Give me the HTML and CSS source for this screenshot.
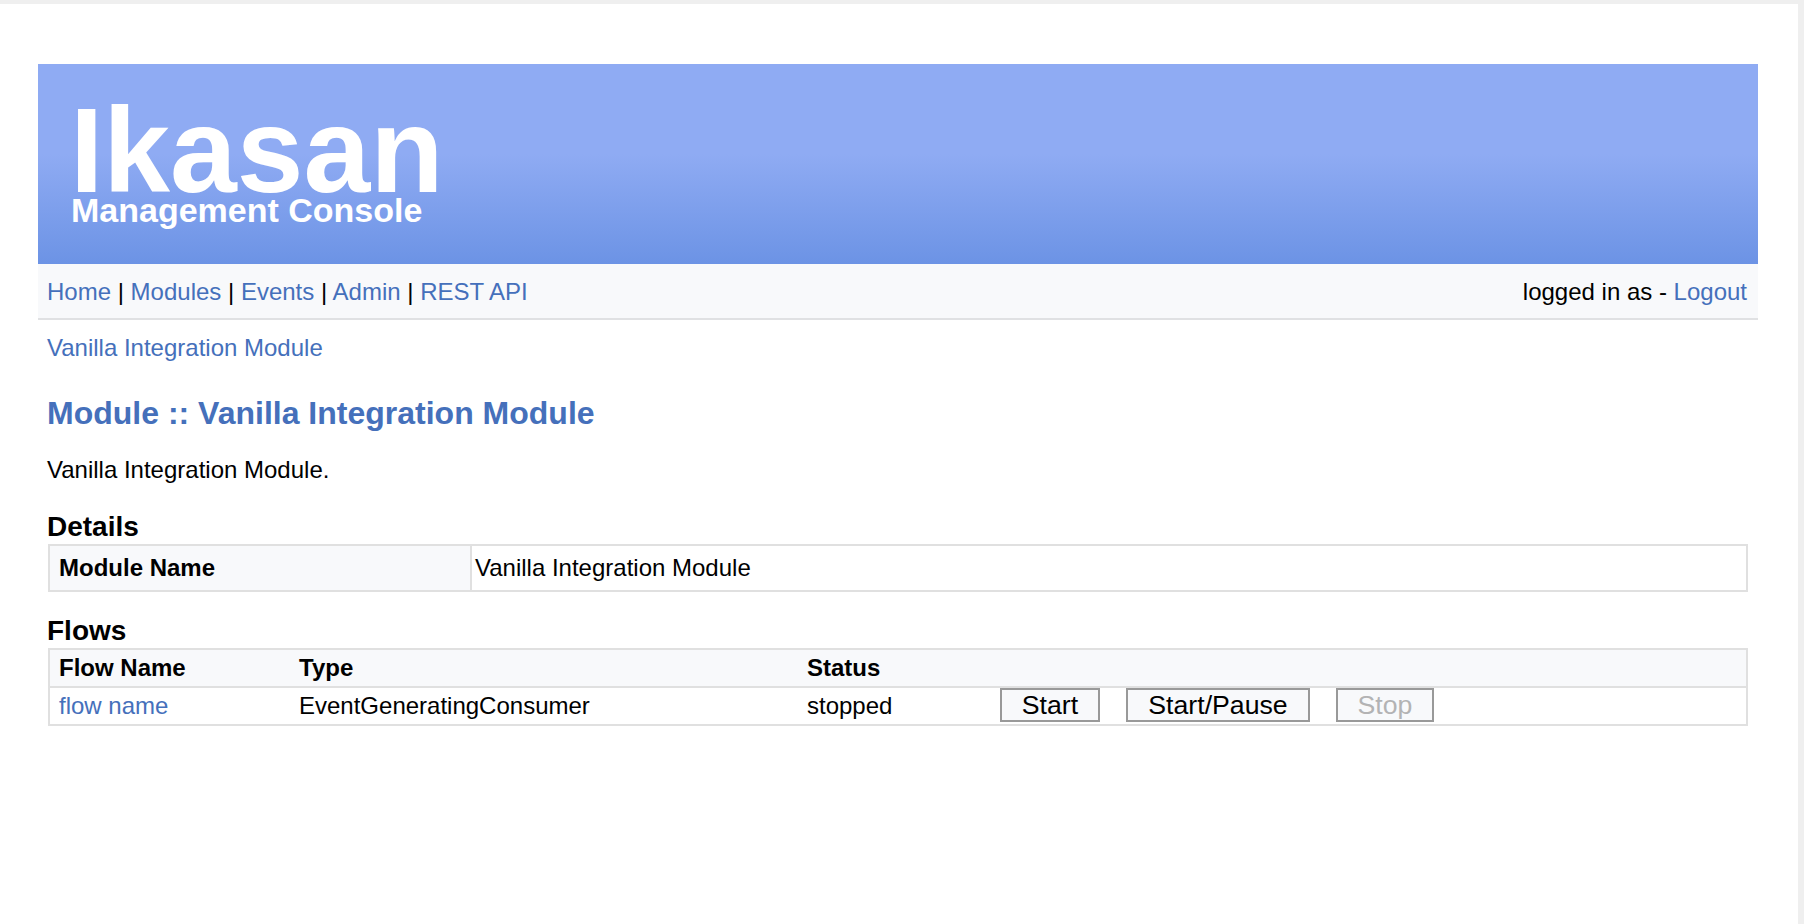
FILE: index.html
```html
<!DOCTYPE html>
<html lang="en">
<head>
<meta charset="utf-8">
<title>Ikasan Management Console</title>
<link rel="stylesheet" href="styles.css">
</head>
<body>
<div class="page">
  <header class="banner">
    <h1 class="logo">Ikasan</h1>
    <div class="tagline">Management Console</div>
  </header>
  <nav class="navbar">
    <div><a href="#">Home</a> | <a href="#">Modules</a> | <a href="#">Events</a> | <a href="#">Admin</a> | <a href="#">REST API</a></div>
    <div>logged in as - <a href="#">Logout</a></div>
  </nav>
  <main class="content">
    <div class="breadcrumb"><a href="#">Vanilla Integration Module</a></div>
    <h2>Module :: Vanilla Integration Module</h2>
    <p>Vanilla Integration Module.</p>
    <h3>Details</h3>
    <div class="table details">
      <div class="label">Module Name</div>
      <div class="value">Vanilla Integration Module</div>
    </div>
    <h3>Flows</h3>
    <div class="table flows">
      <div class="row head"><span>Flow Name</span><span>Type</span><span>Status</span><span></span></div>
      <div class="row">
        <a href="#">flow name</a><span>EventGeneratingConsumer</span><span>stopped</span>
        <div class="actions">
          <button class="start">Start</button>
          <button class="pause">Start/Pause</button>
          <button class="stop" disabled>Stop</button>
        </div>
      </div>
    </div>
  </main>
</div>
</body>
</html>
```
FILE: styles.css
```css
* { box-sizing: border-box; }
body {
  margin: 0;
  background: #efefef;
  font: 24px/28px "Liberation Sans", Arial, sans-serif;
  color: #000;
  padding: 4px 6px 0 0;
  overflow: hidden;
}
a { color: #4570bb; text-decoration: none; }
h1, h2, h3, p { margin: 0; }
.page {
  background: #fff;
  min-height: 920px;
  padding: 60px 40px 0 38px;
}
.banner {
  height: 200px;
  padding: 32px 0 0 33px;
  color: #fff;
  background: linear-gradient(#8fabf3 0%, #8fabf3 45%, #6c93e5 100%);
}
.logo { font-size: 120px; line-height: 108px; height: 95px; margin-left: -1px; }
.tagline { font-size: 34px; font-weight: bold; line-height: 38px; }
.navbar {
  height: 56px;
  padding: 14px 11px 0 9px;
  display: flex;
  justify-content: space-between;
  background: #f8f9fb;
  border-bottom: 2px solid #e0e1e3;
}
.content { padding: 14px 10px 0 9px; }
.breadcrumb { height: 61px; }
h2 { font-size: 32px; line-height: 36px; height: 61px; color: #4570bb; }
p { height: 55px; }
h3 { font-size: 28px; line-height: 32px; height: 33px; }
.table { border: 2px solid #e0e0e0; margin-left: 1px; }
.details { display: flex; height: 48px; margin-bottom: 23px; }
.label { width: 422px; padding: 8px 9px; font-weight: bold; background: #f8f9fb; border-right: 2px solid #e0e0e0; }
.value { padding: 8px 3px; }
.row {
  display: grid;
  grid-template-columns: 240px 508px 193px 1fr;
  padding: 4px 0 0 9px;
  height: 36px;
}
.head { height: 38px; font-weight: bold; background: #f8f9fb; border-bottom: 2px solid #e0e0e0; }
.actions { display: flex; gap: 26px; margin-top: -4px; }
button {
  height: 34px;
  padding: 0;
  border: 2px solid #999;
  background: #f8f9fb;
  color: #000;
  font: 26.67px/30px "Liberation Sans", Arial, sans-serif;
}
button:disabled { color: #b3b3b4; }
.start { width: 100px; }
.pause { width: 184px; }
.stop { width: 98px; }
```
